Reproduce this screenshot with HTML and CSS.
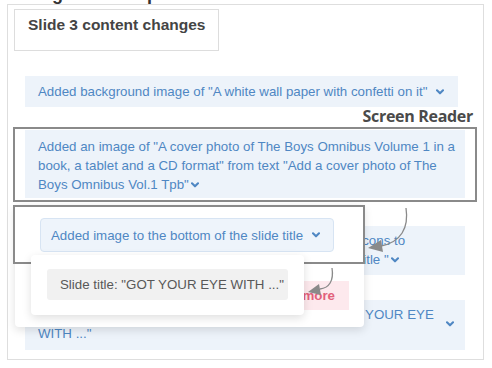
FILE: index.html
```html
<!DOCTYPE html>
<html lang="en">
<head>
  <meta charset="UTF-8">
  <title>Slide 3 content changes</title>
  <link rel="stylesheet" href="styles.css">
</head>
<body>
  <div class="page">
    <h1 class="cut-title"><span>Design check-up</span></h1>

    <section class="panel">
      <div class="panel-title">Slide 3 content changes</div>

      <ul class="changes">
        <li class="change fit">
          Added background image of "A white wall paper with confetti on it"
          <svg class="chev gap" viewBox="0 0 8 6"><path d="M1 1.3 L4 4.3 L7 1.3"/></svg>
        </li>
        <li class="change tall">
          Added an image of "A cover photo of The Boys Omnibus Volume 1 in a book, a tablet and a CD format" from text "Add a cover photo of The Boys Omnibus Vol.1 Tpb"<svg class="chev" viewBox="0 0 8 6"><path d="M1 1.3 L4 4.3 L7 1.3"/></svg>
        </li>
        <li class="change icons">
          Added social media icons of Facebook, Twitter next to icons to<br>the right of the footer texts and beneath the main slide title "<svg class="chev" viewBox="0 0 8 6"><path d="M1 1.3 L4 4.3 L7 1.3"/></svg>
        </li>
        <li class="change row">
          <span>Changed the slide title text from "Slide 3 titles" to "GOT YOUR EYE<br>WITH ..."</span>
          <svg class="chev" viewBox="0 0 8 6"><path d="M1 1.3 L4 4.3 L7 1.3"/></svg>
        </li>
      </ul>
    </section>

    <div class="sr-label">Screen Reader</div>
    <div class="sr-frame frame-item"></div>

    <div class="zoom-card">
      <button class="detail-btn">
        Added image to the bottom of the slide title
        <svg class="chev" viewBox="0 0 8 6"><path d="M1 1.3 L4 4.3 L7 1.3"/></svg>
      </button>
      <button class="more-btn">Show more</button>
    </div>
    <div class="sr-frame frame-btn"></div>

    <div class="sub-card">
      <div class="pill">Slide title: "GOT YOUR EYE WITH ..."</div>
    </div>

    <svg class="arrows" viewBox="0 0 492 368">
      <path class="line" d="M406 208 C 409 228, 401 242, 381 246"/>
      <polygon class="head" points="368,248 381,240 383,252"/>
      <path class="line" d="M332 268 C 334 281, 329 288, 320 289"/>
      <polygon class="head" points="308,292 319,284 321,295"/>
    </svg>
  </div>
</body>
</html>
```

FILE: styles.css
```css
* {
  margin: 0;
  padding: 0;
  box-sizing: border-box;
}

body {
  font-family: 'Liberation Sans', Arial, sans-serif;
  background: #fff;
  width: 492px;
  height: 368px;
  overflow: hidden;
}

.page {
  position: relative;
  height: 368px;
}

/* heading of the page above, cut off by the crop */
.cut-title {
  height: 4px;
  overflow: hidden;
  padding-left: 14px;
  font-size: 18px;
  line-height: 18px;
  color: #333;
}

.cut-title span {
  display: block;
  margin-top: -15px;
}

.panel {
  margin-left: 7px;
  width: 477px;
  border: 1px solid #dedede;
  padding: 4px 18px 9px 6px;
}

.panel-title {
  width: 205px;
  height: 42px;
  border: 1px solid #ddd;
  padding: 6px 13px;
  font-size: 15.5px;
  line-height: 18px;
  font-weight: 700;
  color: #444;
  white-space: nowrap;
}

.changes {
  list-style: none;
  display: flex;
  flex-direction: column;
  gap: 25px;
  margin: 25px 0 0 11px;
}

.change {
  background-color: #edf3fa;
  color: #4f87c3;
  font-size: 13.3px;
  line-height: 19px;
  padding: 6px 8px 6px 13px;
}

.change.fit {
  align-self: flex-start;
  width: 433px;
  white-space: nowrap;
}

.change.tall {
  margin-top: -2px;
  padding: 7px 10px 4px 13px;
}

.change.icons {
  margin-top: 3px;
  padding: 5px 8px 6px 13px;
}

.change.row {
  display: flex;
  align-items: center;
  justify-content: space-between;
  padding: 5px 11px 7px 13px;
}

.chev {
  width: 8px;
  height: 6px;
  margin-left: 2px;
  vertical-align: 1px;
  fill: none;
  stroke: #4f87c3;
  stroke-width: 2.1;
  stroke-linecap: round;
  stroke-linejoin: round;
}

.chev.gap {
  margin-left: 5px;
}

.sr-label {
  position: absolute;
  top: 105px;
  right: 19px;
  font-family: 'Open Sans', sans-serif;
  font-weight: 700;
  font-size: 16px;
  letter-spacing: -0.3px;
  color: #4a4a4a;
}

.sr-frame {
  position: absolute;
  border: 2px solid #8a8a8a;
}

.frame-item {
  left: 13px;
  top: 127px;
  width: 464px;
  height: 75px;
}

.frame-btn {
  left: 13px;
  top: 205px;
  width: 352px;
  height: 59px;
  z-index: 3;
}

.zoom-card {
  position: absolute;
  left: 15px;
  top: 205px;
  width: 349px;
  height: 122px;
  background: #fff;
  border-radius: 4px;
  box-shadow: 0 3px 10px rgba(0, 0, 0, 0.13);
  padding: 13px 15px 16px 25px;
  display: flex;
  flex-direction: column;
  align-items: flex-start;
  z-index: 2;
}

.detail-btn {
  display: flex;
  align-items: center;
  gap: 9px;
  height: 34px;
  padding: 0 13px 0 10px;
  background: #eef4fb;
  border: 1px solid #d7e4f3;
  border-radius: 4px;
  font-family: inherit;
  font-size: 13.3px;
  color: #4f87c3;
}

.detail-btn .chev {
  margin-left: 0;
}

.more-btn {
  align-self: flex-end;
  margin-top: 29px;
  height: 29px;
  padding: 0 14px;
  border: none;
  background: #fde9ed;
  font-family: inherit;
  font-size: 13.3px;
  font-weight: 700;
  color: #e2607b;
}

.sub-card {
  position: absolute;
  left: 31px;
  top: 255px;
  width: 273px;
  height: 60px;
  background: #fff;
  border-radius: 4px;
  box-shadow: 0 3px 10px rgba(0, 0, 0, 0.13);
  padding: 14px 16px;
  z-index: 4;
}

.pill {
  height: 31px;
  line-height: 31px;
  padding-left: 13px;
  background: #f1f1f1;
  border-radius: 3px;
  font-size: 13.3px;
  color: #585858;
}

.arrows {
  position: absolute;
  left: 0;
  top: 0;
  width: 492px;
  height: 368px;
  z-index: 5;
  pointer-events: none;
}

.arrows .line {
  fill: none;
  stroke: #8a8a8a;
  stroke-width: 1.3;
}

.arrows .head {
  fill: #8a8a8a;
}
```
